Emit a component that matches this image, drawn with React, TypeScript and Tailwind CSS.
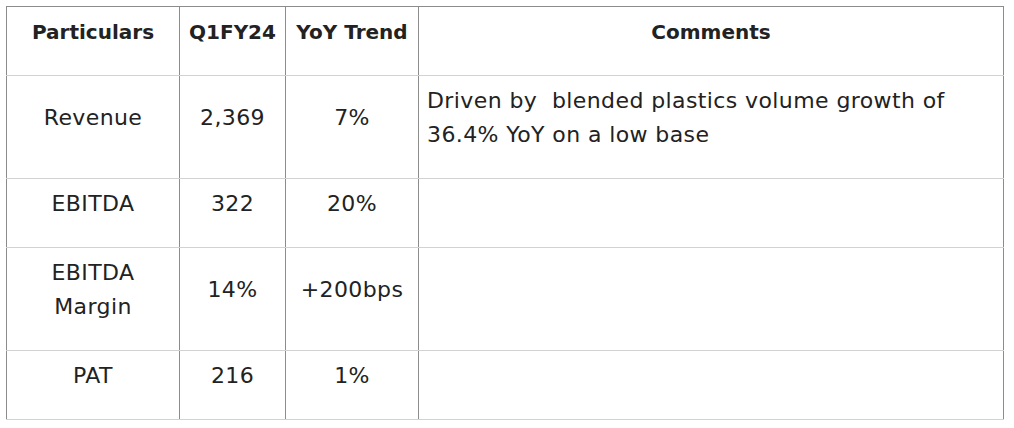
const ROWS = [
  { name: ["Revenue"], q: "2,369", yoy: "7%", comment: "Driven by\u00a0 blended plastics volume growth of 36.4% YoY on a low base" },
  { name: ["EBITDA"], q: "322", yoy: "20%", comment: "" },
  { name: ["EBITDA", "Margin"], q: "14%", yoy: "+200bps", comment: "" },
  { name: ["PAT"], q: "216", yoy: "1%", comment: "" },
];

const cell = "border-x border-x-[#8c8c8c] border-y border-y-[#d2d2d2] pt-[8px] pb-[26px] px-2 align-middle";

export default function App() {
  return (
    <div className="w-[1014px] h-[428px] bg-white p-[6px] font-['DejaVu_Sans',sans-serif] text-[22px] leading-[34px] tracking-[0.4px] text-[#222]">
      <table className="border-collapse table-fixed w-[998px]">
        <colgroup>
          <col className="w-[173px]" />
          <col className="w-[106px]" />
          <col className="w-[133px]" />
          <col />
        </colgroup>
        <thead>
          <tr>
            {["Particulars", "Q1FY24", "YoY Trend", "Comments"].map((h) => (
              <th key={h} className={`${cell} border-t-[#8c8c8c] text-[20px] tracking-normal font-bold text-center whitespace-nowrap`}>
                {h}
              </th>
            ))}
          </tr>
        </thead>
        <tbody>
          {ROWS.map((r, i) => (
            <tr key={i}>
              <td className={`${cell} text-center`}>
                {r.name.map((n) => (
                  <div key={n}>{n}</div>
                ))}
              </td>
              <td className={`${cell} text-center`}>{r.q}</td>
              <td className={`${cell} text-center whitespace-nowrap`}>{r.yoy}</td>
              <td className={`${cell} text-left`}>{r.comment}</td>
            </tr>
          ))}
        </tbody>
      </table>
    </div>
  );
}
